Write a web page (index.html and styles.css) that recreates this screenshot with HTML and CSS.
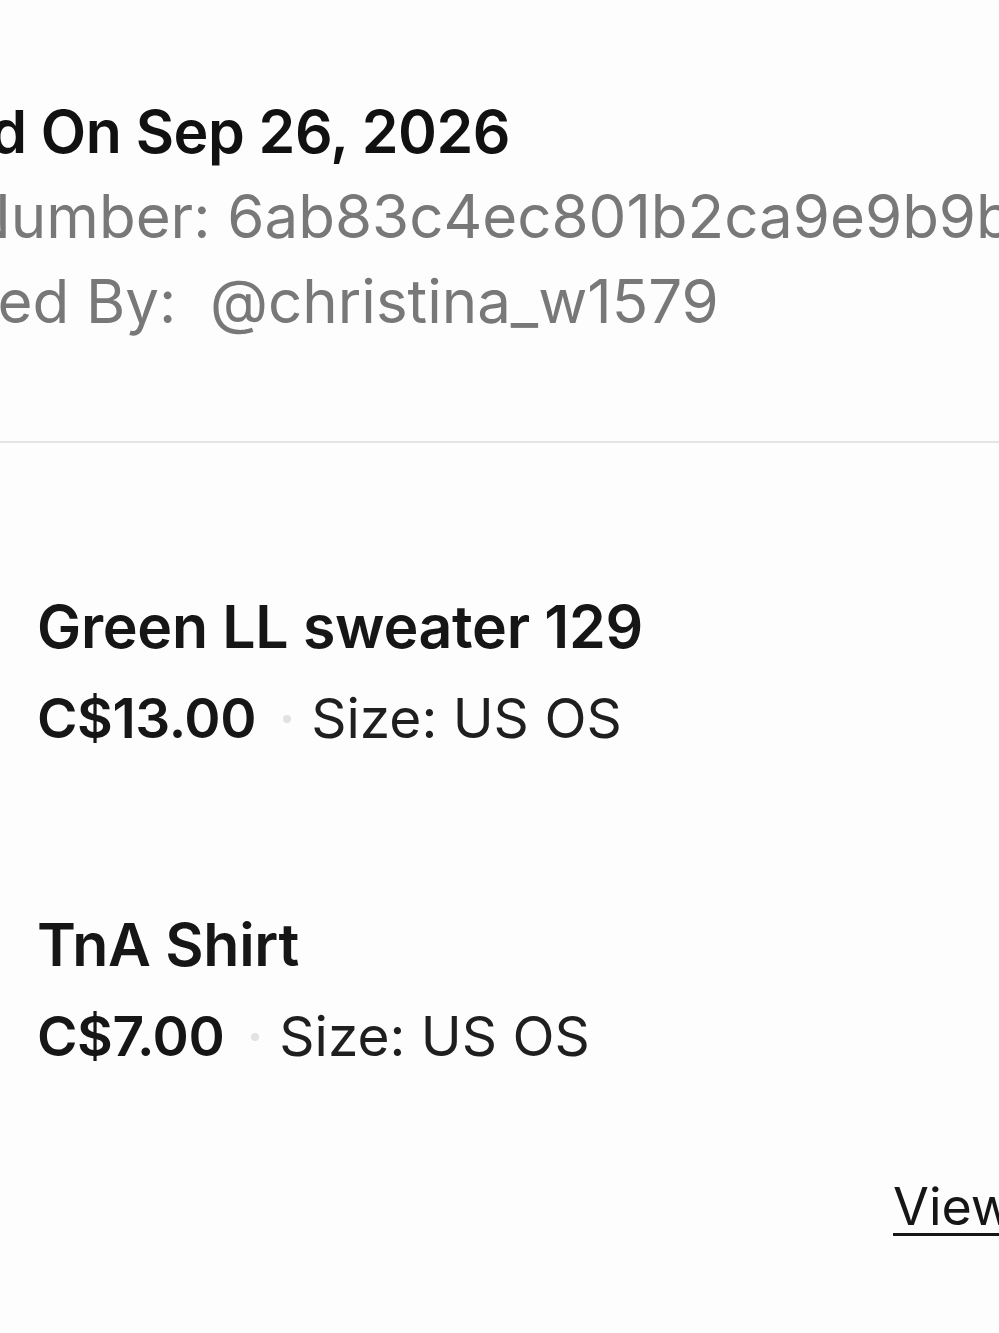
FILE: index.html
```html
<!DOCTYPE html>
<html lang="en">
<head>
  <meta charset="UTF-8">
  <meta name="viewport" content="width=device-width, initial-scale=1.0">
  <title>Order details</title>
  <link rel="stylesheet" href="styles.css">
</head>
<body>
  <div class="order">
    <!-- шапка заказа -->
    <div class="order__head">
      <div class="order__date order__line--date">Ordered On Sep 26, 2026</div>
      <div class="order__meta order__line--num">Order Number: 6ab83c4ec801b2ca9e9b9b1f</div>
      <div class="order__meta order__line--buyer">Purchased By:&nbsp; @christina_w1579</div>
    </div>

    <div class="order__divider"></div>

    <!-- товары -->
    <div class="order__items">
      <div class="order__item">
        <div class="order__item-title">Green LL sweater 129</div>
        <div class="order__item-info">
          <span class="order__price">C$13.00</span>
          <span class="order__dot"></span>
          <span class="order__size">Size: US OS</span>
        </div>
      </div>
      <div class="order__item">
        <div class="order__item-title">TnA Shirt</div>
        <div class="order__item-info">
          <span class="order__price">C$7.00</span>
          <span class="order__dot"></span>
          <span class="order__size">Size: US OS</span>
        </div>
      </div>
    </div>

    <div class="order__links">
      <a href="#" class="order__link">View Order Details</a>
    </div>
  </div>
</body>
</html>
```

FILE: styles.css
```css
* {
  box-sizing: border-box;
}
body {
  margin: 0;
  background: #fdfdfd;
  font-family: Inter, "Noto Sans", sans-serif;
  color: #1a1a1a;
  overflow: hidden;
}
.order {
  width: 999px;
  overflow: hidden;
}

/* шапка */
.order__head {
  padding-top: 89px;
  white-space: nowrap;
}
.order__date,
.order__meta {
  font-size: 59px;
  line-height: 85px;
}
.order__date {
  font-weight: 600;
  color: #111;
  letter-spacing: -0.5px;
}
.order__meta {
  font-size: 60px;
  color: #787878;
}
/* строки шапки обрезаны слева, как на скрине */
.order__line--date {
  margin-left: -203px;
}
.order__line--num {
  margin-left: -213px;
}
.order__line--buyer {
  margin-left: -233px;
}

.order__divider {
  height: 2px;
  margin-top: 97px;
  background: #e4e4e4;
}

/* товары */
.order__items {
  padding: 139px 0 0 37px;
  display: flex;
  flex-direction: column;
  gap: 137px;
}
.order__item-title,
.order__item-info {
  line-height: 89px;
  white-space: nowrap;
}
.order__item-title {
  font-size: 59px;
  font-weight: 600;
  color: #161616;
  letter-spacing: -0.3px;
}
.order__item-info {
  font-size: 55px;
  display: flex;
  align-items: center;
  padding-top: 3px;
}
.order__price {
  font-weight: 600;
  color: #161616;
  letter-spacing: -0.4px;
}
.order__dot {
  width: 8px;
  height: 8px;
  margin: 0 20px 0 27px;
  border-radius: 50%;
  background: #e2e2e2;
}
.order__size {
  color: #1f1f1f;
}

.order__links {
  margin-top: 96px;
  padding-left: 893px;
  white-space: nowrap;
}
.order__link {
  font-size: 52px;
  line-height: 60px;
  color: #161616;
  text-decoration: underline;
  text-decoration-thickness: 3px;
  text-underline-offset: 8px;
}
```
